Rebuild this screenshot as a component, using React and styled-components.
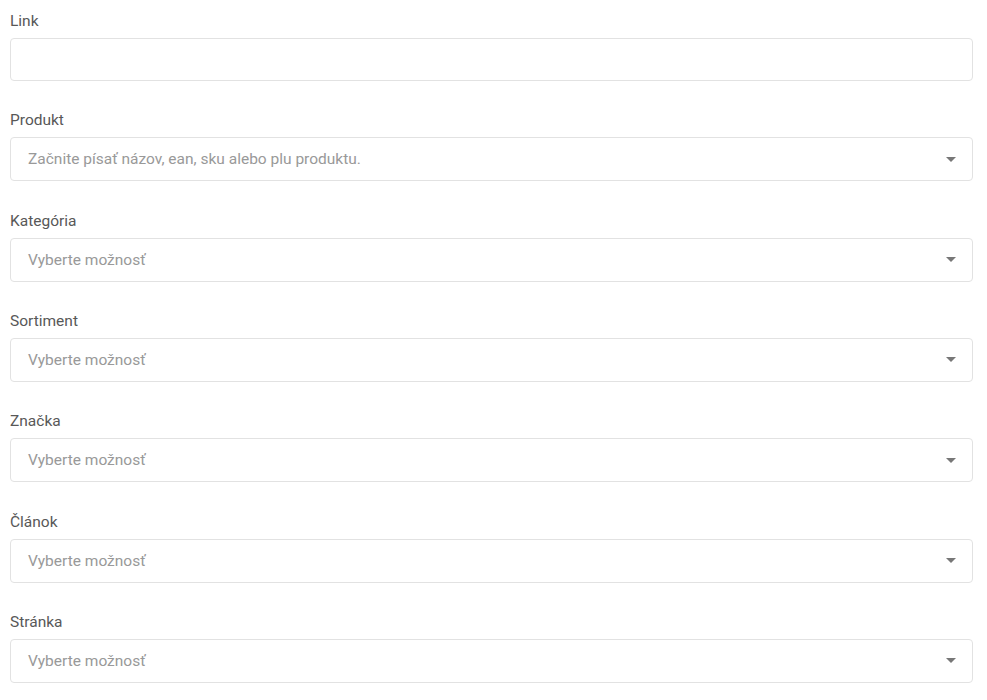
import styled, { createGlobalStyle } from "styled-components";

const GlobalStyle = createGlobalStyle`
  body {
    margin: 0;
    background: #fff;
    font-family: Roboto, "Liberation Sans", sans-serif;
  }
`;

const Form = styled.div`
  padding: 11px 14px 10px 10px;
  display: flex;
  flex-direction: column;
  gap: 29.33px;
`;

const Field = styled.div`
  display: flex;
  flex-direction: column;
  gap: 7px;
`;

const Label = styled.label`
  font-size: 15.5px;
  line-height: 20px;
  color: #585858;
`;

const Input = styled.input`
  box-sizing: border-box;
  height: 43px;
  width: 100%;
  border: 1px solid #e2e2e2;
  border-radius: 4px;
  padding: 0 16px;
  font-family: inherit;
  font-size: 15.5px;
  outline: none;
`;

const Select = styled.div`
  box-sizing: border-box;
  height: 44px;
  border: 1px solid #e2e2e2;
  border-radius: 4px;
  padding: 0 16px 0 17px;
  display: flex;
  align-items: center;
  justify-content: space-between;
  cursor: pointer;
`;

const Placeholder = styled.span`
  font-size: 15.5px;
  color: #999;
`;

const Arrow = styled.span`
  width: 0;
  height: 0;
  border-left: 5px solid transparent;
  border-right: 5px solid transparent;
  border-top: 5px solid #777;
`;

const selects = [
  { label: "Produkt", placeholder: "Začnite písať názov, ean, sku alebo plu produktu." },
  { label: "Kategória", placeholder: "Vyberte možnosť" },
  { label: "Sortiment", placeholder: "Vyberte možnosť" },
  { label: "Značka", placeholder: "Vyberte možnosť" },
  { label: "Článok", placeholder: "Vyberte možnosť" },
  { label: "Stránka", placeholder: "Vyberte možnosť" },
];

const App = () => {
  return (
    <>
      <GlobalStyle />
      <Form>
        <Field>
          <Label>Link</Label>
          <Input type="text" />
        </Field>
        {selects.map((s) => (
          <Field key={s.label}>
            <Label>{s.label}</Label>
            <Select>
              <Placeholder>{s.placeholder}</Placeholder>
              <Arrow />
            </Select>
          </Field>
        ))}
      </Form>
    </>
  );
};

export default App;
